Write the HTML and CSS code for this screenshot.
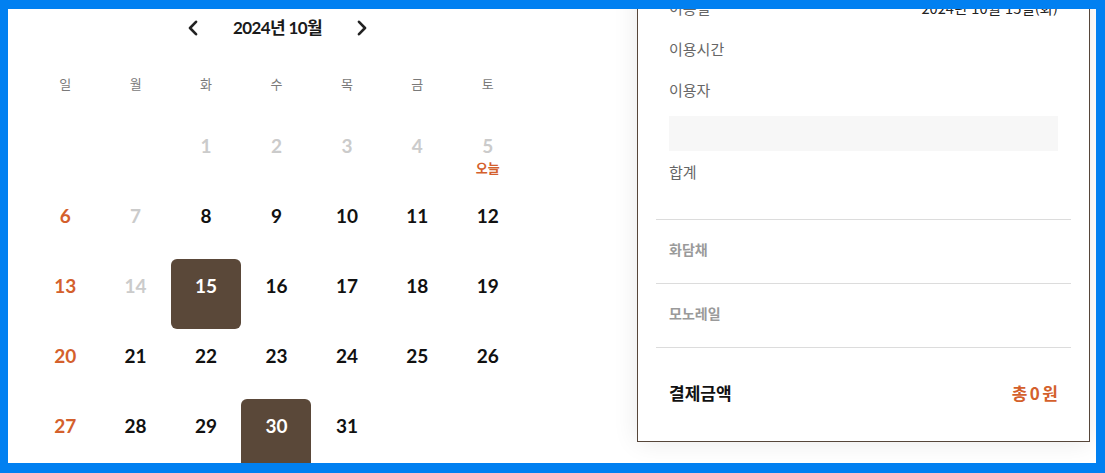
FILE: index.html
```html
<!DOCTYPE html>
<html lang="ko">
<head>
<meta charset="utf-8">
<title>예약</title>
<link rel="stylesheet" href="styles.css">
</head>
<body>
<div class="frame">
  <section class="cal">
    <div class="cal-head">
      <button class="nav" aria-label="이전 달">
        <svg width="12" height="16" viewBox="0 0 12 16"><path d="M9 1.8 L3 8 L9 14.2" fill="none" stroke="#222" stroke-width="2.6" stroke-linecap="round" stroke-linejoin="round"/></svg>
      </button>
      <h2 class="cal-title">2024년 10월</h2>
      <button class="nav" aria-label="다음 달">
        <svg width="12" height="16" viewBox="0 0 12 16"><path d="M3 1.8 L9 8 L3 14.2" fill="none" stroke="#222" stroke-width="2.6" stroke-linecap="round" stroke-linejoin="round"/></svg>
      </button>
    </div>
    <div class="weekdays">
      <span>일</span><span>월</span><span>화</span><span>수</span><span>목</span><span>금</span><span>토</span>
    </div>
    <div class="days">
      <div class="day"></div>
      <div class="day"></div>
      <div class="day off"><span class="num">1</span></div>
      <div class="day off"><span class="num">2</span></div>
      <div class="day off"><span class="num">3</span></div>
      <div class="day off"><span class="num">4</span></div>
      <div class="day off"><span class="num">5</span><span class="today">오늘</span></div>

      <div class="day sun"><span class="num">6</span></div>
      <div class="day off"><span class="num">7</span></div>
      <div class="day"><span class="num">8</span></div>
      <div class="day"><span class="num">9</span></div>
      <div class="day"><span class="num">10</span></div>
      <div class="day"><span class="num">11</span></div>
      <div class="day"><span class="num">12</span></div>

      <div class="day sun"><span class="num">13</span></div>
      <div class="day off"><span class="num">14</span></div>
      <div class="day sel"><span class="num">15</span></div>
      <div class="day"><span class="num">16</span></div>
      <div class="day"><span class="num">17</span></div>
      <div class="day"><span class="num">18</span></div>
      <div class="day"><span class="num">19</span></div>

      <div class="day sun"><span class="num">20</span></div>
      <div class="day"><span class="num">21</span></div>
      <div class="day"><span class="num">22</span></div>
      <div class="day"><span class="num">23</span></div>
      <div class="day"><span class="num">24</span></div>
      <div class="day"><span class="num">25</span></div>
      <div class="day"><span class="num">26</span></div>

      <div class="day sun"><span class="num">27</span></div>
      <div class="day"><span class="num">28</span></div>
      <div class="day"><span class="num">29</span></div>
      <div class="day sel"><span class="num">30</span></div>
      <div class="day"><span class="num">31</span></div>
      <div class="day"></div>
      <div class="day"></div>
    </div>
  </section>

  <aside class="panel">
    <div class="info">
      <div class="row"><span class="label">이용일</span><span class="value">2024년 10월 15일(화)</span></div>
      <div class="row"><span class="label">이용시간</span></div>
      <div class="row"><span class="label">이용자</span></div>
      <div class="users-box"></div>
      <div class="row sum"><span class="label">합계</span></div>
    </div>
    <div class="item"><span>화담채</span></div>
    <div class="item"><span>모노레일</span></div>
    <div class="total">
      <span class="total-label">결제금액</span>
      <span class="total-value">총0원</span>
    </div>
  </aside>
</div>
</body>
</html>
```

FILE: styles.css
```css
* { box-sizing: border-box; }

html, body {
  margin: 0;
  padding: 0;
  background: #fff;
}

.frame {
  width: 1105px;
  height: 473px;
  border-style: solid;
  border-color: #0180f1;
  border-width: 9px 9px 10px 8px;
  overflow: hidden;
  display: flex;
  align-items: flex-start;
  background: #fff;
  font-family: "Noto Sans CJK KR", "Noto Sans", sans-serif;
}

/* ---------- calendar ---------- */
.cal {
  width: 493px;
  margin-left: 22px;
  flex: none;
}

.cal-head {
  height: 38px;
  display: flex;
  align-items: center;
  justify-content: center;
  gap: 34px;
  padding-left: 2px;
}

.nav {
  border: 0;
  background: none;
  padding: 0;
  width: 12px;
  height: 16px;
  display: flex;
}

.cal-title {
  margin: 0;
  font-family: Lato, "Noto Sans CJK KR", sans-serif;
  font-size: 17px;
  font-weight: 700;
  color: #1a1a1a;
  letter-spacing: -0.6px;
  line-height: 20px;
}

.weekdays {
  margin-top: 17px;
  height: 40px;
  padding-bottom: 2px;
  display: grid;
  grid-template-columns: repeat(7, 1fr);
  align-items: center;
  text-align: center;
  font-size: 13px;
  color: #7a7a7a;
}

.days {
  margin-top: 15px;
  display: grid;
  grid-template-columns: repeat(7, 1fr);
  grid-auto-rows: 70px;
}

.day {
  display: flex;
  flex-direction: column;
  align-items: center;
  padding-top: 17px;
  width: 70px;
  justify-self: center;
  border-radius: 6px;
}

.num {
  font-family: Lato, sans-serif;
  font-size: 19px;
  font-weight: 700;
  line-height: 20px;
  color: #111;
}

.day.off .num { color: #cbcbcb; }
.day.sun .num { color: #d4602c; }
.day.sel { background: #5a4839; }
.day.sel .num { color: #fff; }

.today {
  margin-top: 4px;
  font-size: 13px;
  font-weight: 700;
  line-height: 16px;
  color: #d4602c;
}

/* ---------- panel ---------- */
.panel {
  width: 453px;
  margin-left: 114px;
  margin-top: -21px;
  flex: none;
  border: 1px solid #56463a;
  background: #fff;
  padding: 0 18px;
  box-shadow: 0 0 24px rgba(0, 0, 0, 0.09);
}

.info {
  padding: 0 13px 24px;
  border-bottom: 1px solid #dcdcdc;
}

.row {
  height: 41px;
  padding-bottom: 4px;
  display: flex;
  align-items: center;
  justify-content: space-between;
}

.row.sum { height: 44px; }

.label {
  font-size: 15px;
  color: #666;
}

.value {
  font-size: 14.6px;
  color: #222;
}

.users-box {
  margin-top: 4px;
  height: 35px;
  background: #f7f7f7;
}

.item {
  height: 64px;
  padding: 0 13px 5px;
  display: flex;
  align-items: center;
  border-bottom: 1px solid #dcdcdc;
  font-size: 14px;
  font-weight: 700;
  color: #9a9a9a;
}

.total {
  height: 93px;
  padding: 0 13px 5px;
  display: flex;
  align-items: center;
  justify-content: space-between;
}

.total-label {
  font-size: 17px;
  font-weight: 700;
  color: #111;
}

.total-value {
  font-size: 17px;
  font-weight: 700;
  color: #d4602c;
  letter-spacing: 2.5px;
  margin-right: -2.5px;
}
```
